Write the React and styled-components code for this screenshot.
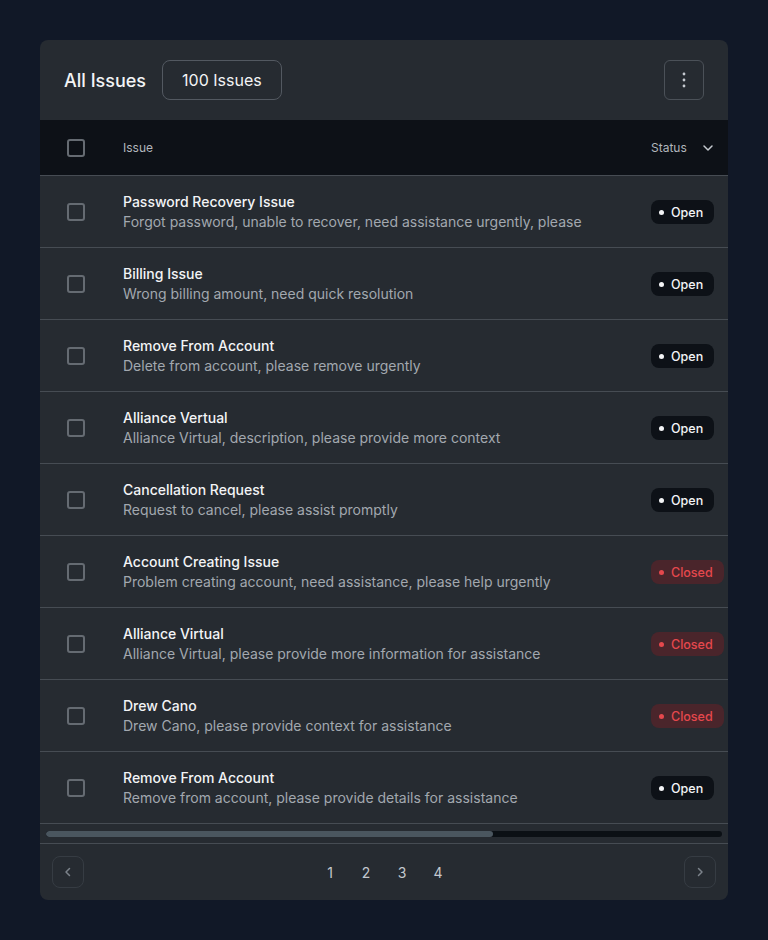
import React from 'react';
import styled, { createGlobalStyle } from 'styled-components';

const GlobalStyle = createGlobalStyle`
  body {
    margin: 0;
    background: #111827;
    font-family: Inter, "Noto Sans", sans-serif;
    -webkit-font-smoothing: antialiased;
  }
`

const Page = styled.div`
  padding: 40px;
  min-height: 940px;
  box-sizing: border-box;
`

const Card = styled.div`
  background: #262b31;
  border-radius: 8px;
  overflow: hidden;
  width: 688px;
`

const Header = styled.div`
  height: 80px;
  display: flex;
  align-items: center;
  padding: 0 24px;
  gap: 16px;
`

const Title = styled.h1`
  margin: 0;
  font-size: 18px;
  font-weight: 500;
  color: #f3f4f6;
`

const CountBtn = styled.div`
  height: 40px;
  padding: 0 19px;
  display: flex;
  align-items: center;
  border: 1px solid #535961;
  border-radius: 8px;
  box-sizing: border-box;
  font-size: 16px;
  color: #f3f4f6;
`

const IconBtn = styled.div`
  margin-left: auto;
  width: 40px;
  height: 40px;
  box-sizing: border-box;
  border: 1px solid #4b5158;
  border-radius: 6px;
  display: flex;
  align-items: center;
  justify-content: center;
  color: #c5cad0;
`

const TableWrap = styled.div`
  overflow: hidden;
`

const Row = styled.div`
  width: 1040px;
  display: grid;
  grid-template-columns: 83px 528px 150px 1fr;
  align-items: center;
  height: ${p => (p.$head ? '55px' : '71px')};
  background: ${p => (p.$head ? '#0d1117' : 'transparent')};
  border-bottom: 1px solid #464c53;
`

const CheckCell = styled.div`
  display: flex;
  justify-content: center;
  padding-right: 11px;
`

const Check = styled.span`
  width: 18px;
  height: 18px;
  box-sizing: border-box;
  border: 2px solid #656b72;
  border-radius: 3px;
`

const HeadLabel = styled.div`
  font-size: 12px;
  color: #b1b6bc;
  display: flex;
  align-items: center;
  gap: 14px;
`

const HeadIcon = styled.span`
  display: flex;
  color: #c5cad0;
`

const IssueCell = styled.div`
  display: flex;
  flex-direction: column;
`

const IssueTitle = styled.div`
  font-size: 14px;
  line-height: 20px;
  font-weight: 500;
  color: #f3f4f6;
`

const IssueDesc = styled.div`
  font-size: 14px;
  line-height: 20px;
  color: #a2a8af;
`

const Badge = styled.span`
  display: inline-flex;
  align-items: center;
  gap: 7px;
  height: 24px;
  padding: 0 11px 0 8px;
  border-radius: 8px;
  font-size: 12.5px;
  font-weight: 500;
  background: ${p => (p.$closed ? '#4a252b' : '#0d1117')};
  color: ${p => (p.$closed ? '#e5484d' : '#f3f4f6')};
  &::before {
    content: '';
    width: 5px;
    height: 5px;
    border-radius: 50%;
    background: currentColor;
  }
`

const ScrollArea = styled.div`
  height: 19px;
  padding: 0 6px;
  display: flex;
  align-items: center;
  border-bottom: 1px solid #464c53;
`

const Track = styled.div`
  flex: 1;
  height: 6px;
  border-radius: 3px;
  background: #0b1015;
  overflow: hidden;
`

const Thumb = styled.div`
  height: 100%;
  border-radius: 3px;
  background: #4a565f;
`

const Footer = styled.div`
  height: 56px;
  display: flex;
  align-items: center;
  justify-content: space-between;
  padding: 0 12px;
`

const PageBtn = styled.div`
  width: 32px;
  height: 32px;
  box-sizing: border-box;
  border: 1px solid #363c43;
  border-radius: 8px;
  display: flex;
  align-items: center;
  justify-content: center;
  color: #7b828a;
`

const Pages = styled.div`
  display: flex;
  font-size: 14px;
  color: #c3c8ce;
`

const PageNum = styled.span`
  width: 36px;
  text-align: center;
`

const issues = [
  ['Password Recovery Issue', 'Forgot password, unable to recover, need assistance urgently, please', 'open'],
  ['Billing Issue', 'Wrong billing amount, need quick resolution', 'open'],
  ['Remove From Account', 'Delete from account, please remove urgently', 'open'],
  ['Alliance Vertual', 'Alliance Virtual, description, please provide more context', 'open'],
  ['Cancellation Request', 'Request to cancel, please assist promptly', 'open'],
  ['Account Creating Issue', 'Problem creating account, need assistance, please help urgently', 'closed'],
  ['Alliance Virtual', 'Alliance Virtual, please provide more information for assistance', 'closed'],
  ['Drew Cano', 'Drew Cano, please provide context for assistance', 'closed'],
  ['Remove From Account', 'Remove from account, please provide details for assistance', 'open'],
]

const Chevron = ({ dir }) => {
  const d = dir === 'down' ? 'M3 5l4 4 4-4' : dir === 'left' ? 'M8.5 3.5L5 7l3.5 3.5' : 'M5.5 3.5L9 7l-3.5 3.5'
  return (
    <svg width="14" height="14" viewBox="0 0 14 14" fill="none">
      <path d={d} stroke="currentColor" strokeWidth="1.5" strokeLinecap="round" strokeLinejoin="round" />
    </svg>
  )
}

const App = () => {
  return (
    <Page>
      <GlobalStyle />
      <Card>
        <Header>
          <Title>All Issues</Title>
          <CountBtn>100 Issues</CountBtn>
          <IconBtn>
            <svg width="4" height="16" viewBox="0 0 4 16">
              <circle cx="2" cy="2" r="1.4" fill="currentColor" />
              <circle cx="2" cy="8" r="1.4" fill="currentColor" />
              <circle cx="2" cy="14" r="1.4" fill="currentColor" />
            </svg>
          </IconBtn>
        </Header>
        <TableWrap>
          <Row $head>
            <CheckCell><Check /></CheckCell>
            <HeadLabel>Issue</HeadLabel>
            <HeadLabel>Status <HeadIcon><Chevron dir="down" /></HeadIcon></HeadLabel>
            <div />
          </Row>
          {issues.map(([t, d, s], i) => (
            <Row key={i}>
              <CheckCell><Check /></CheckCell>
              <IssueCell>
                <IssueTitle>{t}</IssueTitle>
                <IssueDesc>{d}</IssueDesc>
              </IssueCell>
              <div>
                <Badge $closed={s === 'closed'}>{s === 'closed' ? 'Closed' : 'Open'}</Badge>
              </div>
              <div />
            </Row>
          ))}
        </TableWrap>
        <ScrollArea>
          <Track>
            <Thumb style={{ width: `${(688 / 1040) * 100}%` }} />
          </Track>
        </ScrollArea>
        <Footer>
          <PageBtn><Chevron dir="left" /></PageBtn>
          <Pages>
            {[1, 2, 3, 4].map(n => <PageNum key={n}>{n}</PageNum>)}
          </Pages>
          <PageBtn><Chevron dir="right" /></PageBtn>
        </Footer>
      </Card>
    </Page>
  );
}

export default App;
